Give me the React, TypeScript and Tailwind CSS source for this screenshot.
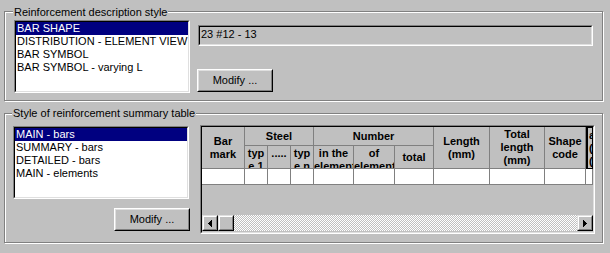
import React from "react";

const descStyles = [
  "BAR SHAPE",
  "DISTRIBUTION - ELEMENT VIEW",
  "BAR SYMBOL",
  "BAR SYMBOL - varying L",
];

const tableStyles = ["MAIN - bars", "SUMMARY - bars", "DETAILED - bars", "MAIN - elements"];

const Listbox = ({ items, selected }: { items: string[]; selected: number }) => (
  <div className="w-[176px] h-[73px] border border-t-[#808080] border-l-[#808080] border-r-white border-b-white">
    <div className="h-full bg-white border border-t-black border-l-black border-r-[#dfdfdf] border-b-[#dfdfdf] overflow-hidden">
      {items.map((item, i) => (
        <div
          key={item}
          className={
            i === selected
              ? "h-[13px] leading-[13px] pl-[1px] whitespace-nowrap bg-[#000080] text-white"
              : "h-[13px] leading-[13px] pl-[1px] whitespace-nowrap text-black"
          }
        >
          {item}
        </div>
      ))}
    </div>
  </div>
);

const Win98Button = ({ label, className }: { label: string; className: string }) => (
  <div
    className={`w-[76px] h-[23px] border border-t-white border-l-white border-b-black border-r-black ${className}`}
  >
    <div className="h-full flex items-center justify-center border border-t-[#dfdfdf] border-l-[#dfdfdf] border-b-[#808080] border-r-[#808080] leading-[13px]">
      {label}
    </div>
  </div>
);

const ScrollButton = ({ dir }: { dir: "left" | "right" }) => (
  <div className="w-[16px] h-[16px] border border-t-[#dfdfdf] border-l-[#dfdfdf] border-b-black border-r-black">
    <div className="h-full flex items-center justify-center border border-t-white border-l-white border-b-[#808080] border-r-[#808080]">
      <svg width="4" height="7" viewBox="0 0 4 7" shapeRendering="crispEdges">
        {dir === "left" ? (
          <>
            <rect x="0" y="3" width="1" height="1" fill="#000" />
            <rect x="1" y="2" width="1" height="3" fill="#000" />
            <rect x="2" y="1" width="1" height="5" fill="#000" />
            <rect x="3" y="0" width="1" height="7" fill="#000" />
          </>
        ) : (
          <>
            <rect x="0" y="0" width="1" height="7" fill="#000" />
            <rect x="1" y="1" width="1" height="5" fill="#000" />
            <rect x="2" y="2" width="1" height="3" fill="#000" />
            <rect x="3" y="3" width="1" height="1" fill="#000" />
          </>
        )}
      </svg>
    </div>
  </div>
);

// header cells, auto-placed into the grid
const headers = [
  { lines: ["Bar", "mark"], cls: "row-span-2 justify-center" },
  { lines: ["Steel"], cls: "col-span-3 justify-center" },
  { lines: ["Number"], cls: "col-span-3 justify-center" },
  { lines: ["Length", "(mm)"], cls: "row-span-2 justify-center" },
  { lines: ["Total", "length", "(mm)"], cls: "row-span-2 justify-center" },
  { lines: ["Shape", "code"], cls: "row-span-2 justify-center" },
];

// narrow columns: text wraps and gets clipped like the original grid
const subHeaders = [
  { lines: ["typ", "e 1"], cls: "justify-start pt-[1px]" },
  { lines: ["....."], cls: "justify-start pt-[1px]" },
  { lines: ["typ", "e n"], cls: "justify-start pt-[1px]" },
  { lines: ["in the", "element"], cls: "justify-start pt-[1px]" },
  { lines: ["of", "element"], cls: "justify-start pt-[1px]" },
  { lines: ["total"], cls: "justify-center" },
];

const HeaderCell = ({ lines, cls }: { lines: string[]; cls: string }) => (
  <div
    className={`flex flex-col overflow-hidden border-r border-b border-[#808080] leading-[13px] ${cls}`}
  >
    {lines.map((l) => (
      <div key={l} className="w-full flex [justify-content:safe_center] whitespace-nowrap">
        {l}
      </div>
    ))}
  </div>
);

const SummaryGrid = () => (
  <div className="w-[395px] h-[109px] border border-t-[#808080] border-l-[#808080] border-r-white border-b-white">
    <div className="h-full flex flex-col border border-t-black border-l-black border-r-[#dfdfdf] border-b-[#dfdfdf] bg-[#c0c0c0]">
      <div className="grid grid-cols-[43px_23px_23px_23px_40px_41px_39px_56px_55px_41px_1fr] grid-rows-[19px_23px_16px] font-bold">
        {headers.map((h) => (
          <HeaderCell key={h.lines.join()} lines={h.lines} cls={h.cls} />
        ))}
        <div className="row-span-2 row-start-1 col-start-11 flex flex-col justify-center overflow-hidden border-l-2 border-t border-r border-b border-black leading-[13px] pl-[1px]">
          <div className="whitespace-nowrap">a</div>
          <div className="whitespace-nowrap">(</div>
          <div className="whitespace-nowrap">(</div>
        </div>
        {subHeaders.map((h, i) => (
          <HeaderCell key={i} lines={h.lines} cls={h.cls} />
        ))}
        {Array.from({ length: 11 }).map((_, i) => (
          <div key={i} className="bg-white border-r border-b border-[#808080]" />
        ))}
      </div>
      <div className="mt-auto mb-[1px] h-[16px] flex">
        <ScrollButton dir="left" />
        <div className="w-[16px] h-[16px] border border-t-[#dfdfdf] border-l-[#dfdfdf] border-b-black border-r-black">
          <div className="h-full border border-t-white border-l-white border-b-[#808080] border-r-[#808080]" />
        </div>
        <div className="flex-1 bg-[repeating-conic-gradient(#ffffff_0%_25%,#c0c0c0_0%_50%)] bg-[length:2px_2px]" />
        <ScrollButton dir="right" />
      </div>
    </div>
  </div>
);

export default function App() {
  return (
    <div className="w-[610px] h-[253px] overflow-hidden bg-[#c0c0c0] pt-[11px] pl-[4px] text-[11px] text-black font-['Liberation_Sans',Arial,sans-serif]">
      {/* Reinforcement description style */}
      <div className="w-[599px] h-[90px] border border-[#808080] shadow-[inset_1px_1px_0_#fff,1px_1px_0_#fff]">
        <div className="w-fit -mt-[6px] ml-[8px] px-[1px] bg-[#c0c0c0] leading-[13px]">
          Reinforcement description style
        </div>
        <div className="flex mt-[1px] ml-[9px]">
          <Listbox items={descStyles} selected={0} />
          <div className="ml-[8px] pt-[5px] flex flex-col">
            <div className="w-[395px] h-[21px] border border-t-[#808080] border-l-[#808080] border-r-white border-b-white">
              <div className="h-full border border-t-black border-l-black border-r-[#dfdfdf] border-b-[#dfdfdf] leading-[13px] pt-[1px] pl-[1px] bg-[#c0c0c0]">
                23 #12 - 13
              </div>
            </div>
            <Win98Button label="Modify ..." className="mt-[23px] -ml-[1px]" />
          </div>
        </div>
      </div>

      {/* Style of reinforcement summary table */}
      <div className="mt-[12px] w-[599px] h-[130px] border border-[#808080] shadow-[inset_1px_1px_0_#fff,1px_1px_0_#fff]">
        <div className="w-fit -mt-[7px] ml-[7px] px-[1px] bg-[#c0c0c0] leading-[13px]">
          Style of reinforcement summary table
        </div>
        <div className="flex items-start mt-[5px] ml-[8px]">
          <div className="pt-[1px] flex flex-col">
            <Listbox items={tableStyles} selected={0} />
            <Win98Button label="Modify ..." className="mt-[9px] ml-[101px]" />
          </div>
          <div className="ml-[10px]">
            <SummaryGrid />
          </div>
        </div>
      </div>
    </div>
  );
}
